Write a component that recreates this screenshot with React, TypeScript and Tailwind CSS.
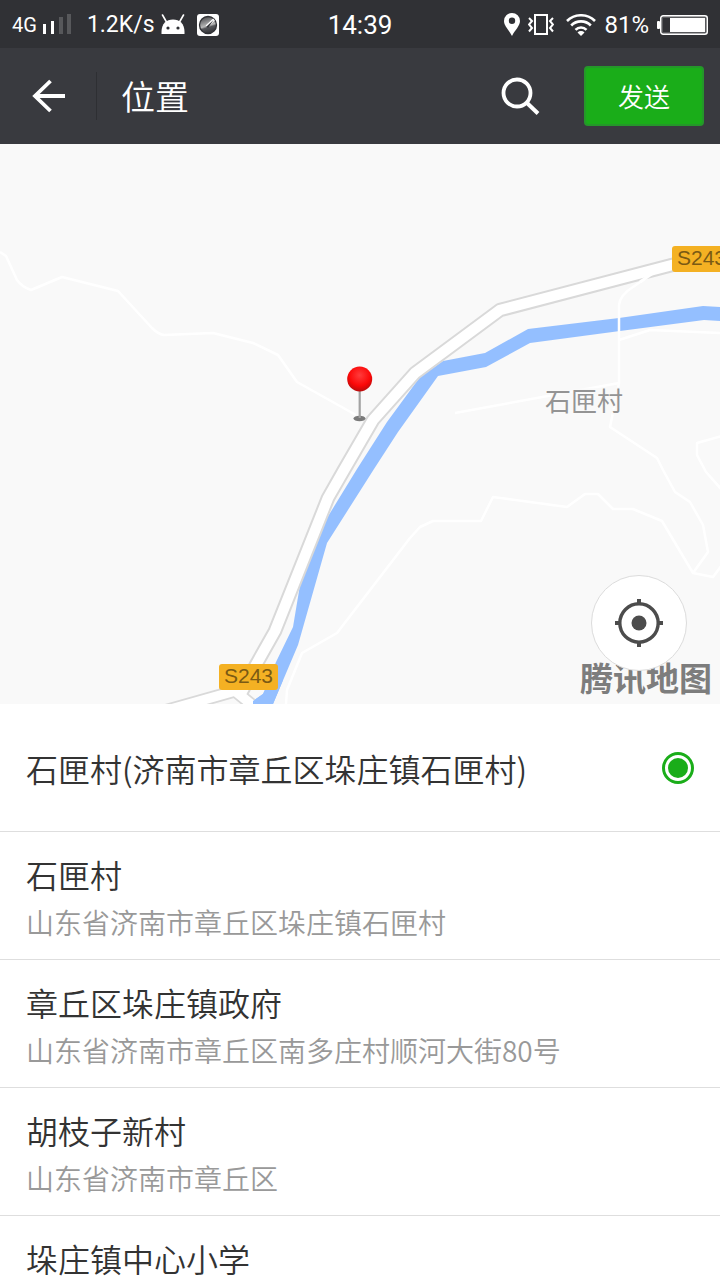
import { useState } from "react";

type Place = { id: string; name: string; address?: string };

const places: Place[] = [
  { id: "current", name: "石匣村(济南市章丘区垛庄镇石匣村)" },
  { id: "shixia", name: "石匣村", address: "山东省济南市章丘区垛庄镇石匣村" },
  { id: "gov", name: "章丘区垛庄镇政府", address: "山东省济南市章丘区南多庄村顺河大街80号" },
  { id: "huzhizi", name: "胡枝子新村", address: "山东省济南市章丘区" },
  { id: "school", name: "垛庄镇中心小学" },
];

function SignalIcon() {
  return (
    <svg width="28" height="22" viewBox="0 0 28 22" className="shrink-0" aria-hidden="true">
      <rect x="0" y="10" width="3" height="10" fill="#fff" />
      <rect x="8" y="7" width="3" height="13" fill="#fff" />
      <rect x="16" y="3" width="4" height="17" fill="#57585b" />
      <rect x="24" y="0" width="4" height="20" fill="#57585b" />
    </svg>
  );
}

function AndroidIcon() {
  return (
    <svg width="24" height="22" viewBox="0 0 24 22" className="shrink-0" aria-hidden="true">
      <path d="M.5 20v-2C.5 9.500 5.500 5.500 12 5.500S23.500 9.500 23.500 18v2z" fill="#fff" />
      <path d="M1.500 1 5.500 8M22.500 1 18.500 8" stroke="#fff" strokeWidth="1.600" strokeLinecap="round" />
      <circle cx="7" cy="14" r="1.600" fill="#303135" />
      <circle cx="17" cy="14" r="1.600" fill="#303135" />
    </svg>
  );
}

function GaugeIcon() {
  return (
    <svg width="22" height="22" viewBox="0 0 22 22" className="shrink-0" aria-hidden="true">
      <defs>
        <linearGradient id="gauge" x1="0.300" y1="0" x2="0.600" y2="1">
          <stop offset="0" stopColor="#4a4b4e" />
          <stop offset="0.550" stopColor="#b9b9b9" />
          <stop offset="0.650" stopColor="#55565a" />
          <stop offset="1" stopColor="#303135" />
        </linearGradient>
      </defs>
      <rect width="22" height="22" rx="3" fill="#fff" />
      <circle cx="11" cy="11" r="8.500" fill="url(#gauge)" stroke="#303135" strokeWidth="1.300" />
      <path d="m9.500 12.500 7.500-7" stroke="#fff" strokeWidth="2.600" />
      <path d="m9 13 7.500-7-5.500 8z" fill="#303135" />
    </svg>
  );
}

function PinIcon() {
  return (
    <svg width="16" height="24" viewBox="0 0 16 24" className="shrink-0" aria-hidden="true">
      <path
        fillRule="evenodd"
        fill="#fff"
        d="M8 0a8 8 0 0 0-8 8c0 5 5 9 8 15 3-6 8-10 8-15a8 8 0 0 0-8-8zm0 4.500a3.200 3.200 0 1 1 0 6.400 3.200 3.200 0 0 1 0-6.400z"
      />
    </svg>
  );
}

function VibrateIcon() {
  return (
    <svg width="26" height="22" viewBox="0 0 26 22" fill="none" stroke="#fff" className="shrink-0" aria-hidden="true">
      <rect x="7" y="1" width="12" height="19" strokeWidth="2" />
      <path d="m1 4 3 3-3 3.500L4 14l-3 3.500M25 4l-3 3 3 3.500-3 3.500 3 3.500" strokeWidth="2" />
    </svg>
  );
}

function WifiIcon() {
  return (
    <svg width="30" height="22" viewBox="0 0 30 22" fill="none" stroke="#fff" className="shrink-0" aria-hidden="true">
      <path d="M1 7a20 20 0 0 1 28 0M5.200 11.500a13.800 13.800 0 0 1 19.600 0M9.500 15.800a7.600 7.600 0 0 1 11 0" strokeWidth="2.600" />
      <path d="M11.500 18.500a5 5 0 0 1 7 0L15 22z" fill="#fff" stroke="none" />
    </svg>
  );
}

function BatteryIcon() {
  return (
    <svg width="51" height="20" viewBox="0 0 51 20" className="shrink-0" aria-hidden="true">
      <rect x="0" y="6" width="3" height="8" rx="1" fill="#fff" />
      <rect x="3.700" y="0.700" width="46.600" height="18.600" rx="2.500" fill="#58595c" stroke="#fff" strokeWidth="1.400" />
      <rect x="6" y="3" width="7" height="14" fill="#303135" />
      <rect x="13" y="3" width="35" height="14" fill="#fff" />
    </svg>
  );
}

function StatusBar() {
  return (
    <div className="grid h-12 shrink-0 grid-cols-[1fr_auto_1fr] items-center bg-[#303135] px-3 pt-0.5 text-white">
      <div className="flex items-center gap-1.5">
        <span className="text-[20px]">4G</span>
        <SignalIcon />
        <span className="ml-2.5 text-[23px]">1.2K/s</span>
        <AndroidIcon />
        <span className="ml-1.5 flex">
          <GaugeIcon />
        </span>
      </div>
      <span className="text-[26px]">14:39</span>
      <div className="flex items-center justify-end gap-2">
        <PinIcon />
        <VibrateIcon />
        <span className="ml-1 flex">
          <WifiIcon />
        </span>
        <span className="text-[24px]">81%</span>
        <BatteryIcon />
      </div>
    </div>
  );
}

function Header() {
  return (
    <header className="flex h-24 shrink-0 items-center bg-[#393a3f] pr-4 text-white">
      <button type="button" aria-label="返回" className="flex h-12 w-[97px] items-center border-r border-[#2e2f33] pl-8">
        <svg width="34" height="34" viewBox="0 0 34 34" fill="none" stroke="#fff" aria-hidden="true">
          <path d="M33 17H3M18.500 2 3 17l15.500 15" strokeWidth="3.800" />
        </svg>
      </button>
      <h1 className="ml-6 flex-1 pt-1 text-[34px] font-[350]">位置</h1>
      <button type="button" aria-label="搜索" className="mr-11 flex">
        <svg width="40" height="40" viewBox="0 0 40 40" fill="none" stroke="#fff" aria-hidden="true">
          <circle cx="17" cy="17" r="13.500" strokeWidth="3.800" />
          <path d="m26.500 26.500 11.500 11" strokeWidth="4" />
        </svg>
      </button>
      <button
        type="button"
        className="h-[60px] w-[120px] rounded border-2 border-[#25972a] bg-[#1aad19] pt-1 text-[26px] font-[350]"
      >
        发送
      </button>
    </header>
  );
}

const mainRoad = "M735 250 672 265 500 310 415 373 373 420 344 470 328 498 275 631 257 663 240 695";
const sideRoad = "M150 715 235 691 262 713";
const lanes = [
  "M0 252 6 256 17 280Q22 287 31 290L62 277 118 291 152 328Q158 334 164 335L213 333 253 343 278 355 297 382 356 415",
  "M653 273 633 287Q620 295 619 305V383L610 427 657 458 663 470 675 492 690 502 703 525 708 552 693 573 713 577 722 565",
  "M722 436 697 443V455L706 472 722 490",
  "M455 413 619 383",
  "M619 340 650 330 722 333",
  "M286 704 287 690 302 653 337 633 410 538 420 527 433 521H481L493 497 567 507 585 494H598L613 509H633L662 521 693 573",
];

function MapDrawing() {
  return (
    <svg
      viewBox="0 144 720 560"
      preserveAspectRatio="xMidYMid slice"
      className="block h-full w-full"
      role="img"
      aria-label="地图"
    >
      <defs>
        <radialGradient id="pin" cx="0.500" cy="0.350" r="0.650">
          <stop offset="0" stopColor="#ff3c3c" />
          <stop offset="0.650" stopColor="#fb0808" />
          <stop offset="1" stopColor="#b80c0c" />
        </radialGradient>
      </defs>
      <rect y="144" width="720" height="560" fill="#f9f9f9" />
      <path
        fill="#94bfff"
        d="M253 704V701L263 694 276 662 293 627 300 585 327 518 357 469 387 422 420 377 443 361 485 353 528 329 619 318 703 306 720 307V321L704 320 620 331 530 343 486 367 438 376 398 432 374 469 327 543 298 645 273 704Z"
      />
      <g fill="none" stroke="#fff" strokeWidth="2.500" strokeLinejoin="round">
        {lanes.map((d) => (
          <path key={d} d={d} />
        ))}
      </g>
      <g fill="none" strokeLinejoin="round">
        <path d={sideRoad} stroke="#d9d9d9" strokeWidth="13" strokeLinejoin="miter" />
        <path d={mainRoad} stroke="#d9d9d9" strokeWidth="14.500" />
        <path d={sideRoad} stroke="#fff" strokeWidth="9.500" strokeLinejoin="miter" />
        <path d={mainRoad} stroke="#fff" strokeWidth="10.500" />
      </g>
      <path d="M253 704V701L263 694 273 678 283 680 273 704Z" fill="#94bfff" />
      <path d="M653 273 640 282" stroke="#fff" strokeWidth="3" />
      <g fontFamily="'Liberation Sans', sans-serif" fontSize="21" fill="#7a5a14">
        <rect x="219" y="664" width="59" height="26" rx="3" fill="#f4b123" />
        <text x="224" y="683">S243</text>
        <rect x="672" y="246" width="59" height="26" rx="3" fill="#f4b123" />
        <text x="677" y="265">S243</text>
      </g>
      <text
        x="545"
        y="411"
        fontSize="26"
        fill="#949494"
        stroke="#fafafa"
        strokeWidth="3"
        strokeLinejoin="round"
        paintOrder="stroke"
      >
        石匣村
      </text>
      <ellipse cx="359.500" cy="418.500" rx="6" ry="2.800" fill="#7a7a7a" />
      <path d="M359.700 390V418" stroke="#a3a3a3" strokeWidth="2.200" />
      <circle cx="359.700" cy="379" r="12.500" fill="url(#pin)" />
    </svg>
  );
}

function MapView() {
  return (
    <section className="relative h-[560px] shrink-0 overflow-hidden">
      <MapDrawing />
      <span className="absolute right-2 bottom-1 text-[33px] leading-10 font-bold text-[#7d7d7d]">腾讯地图</span>
      <button
        type="button"
        aria-label="定位"
        className="absolute right-[33px] bottom-[33px] flex size-24 items-center justify-center rounded-full border border-[#dcdcdc] bg-white"
      >
        <svg width="48" height="48" viewBox="0 0 48 48" fill="none" stroke="#4c4c4c" aria-hidden="true">
          <circle cx="24" cy="24" r="19.200" strokeWidth="3.400" />
          <path d="M24 0v5M24 43v5M0 24h5M43 24h5" strokeWidth="4" />
          <circle cx="24" cy="24" r="7.500" fill="#4c4c4c" stroke="none" />
        </svg>
      </button>
    </section>
  );
}

type RowProps = { place: Place; selected: boolean; single: boolean; onSelect: () => void };

function PlaceRow({ place, selected, single, onSelect }: RowProps) {
  return (
    <label
      className={`flex min-h-32 shrink-0 justify-between border-b border-[#dedede] px-[26px] ${
        single ? "items-center" : "items-start pt-[18px]"
      }`}
    >
      <span className="flex flex-col">
        <span className="text-[32px] leading-[48px] font-[350] text-[#333]">{place.name}</span>
        {place.address && (
          <span className="text-[28px] leading-[48px] font-[350] text-[#999]">{place.address}</span>
        )}
      </span>
      <input
        type="radio"
        name="place"
        checked={selected}
        onChange={onSelect}
        className="size-8 shrink-0 appearance-none rounded-full border-[3px] border-[#1aad19] bg-[#1aad19] bg-clip-content p-[3px] opacity-0 checked:opacity-100"
      />
    </label>
  );
}

export default function App() {
  const [selected, setSelected] = useState("current");
  return (
    <div className="flex h-screen flex-col overflow-hidden bg-white font-[Roboto,'Noto_Sans_CJK_SC',sans-serif]">
      <StatusBar />
      <Header />
      <MapView />
      <main className="flex min-h-0 flex-1 flex-col overflow-y-auto font-['Noto_Sans_CJK_SC',sans-serif] [scrollbar-width:none]">
        {places.map((place, index) => (
          <PlaceRow
            key={place.id}
            place={place}
            single={index === 0}
            selected={place.id === selected}
            onSelect={() => setSelected(place.id)}
          />
        ))}
      </main>
    </div>
  );
}
